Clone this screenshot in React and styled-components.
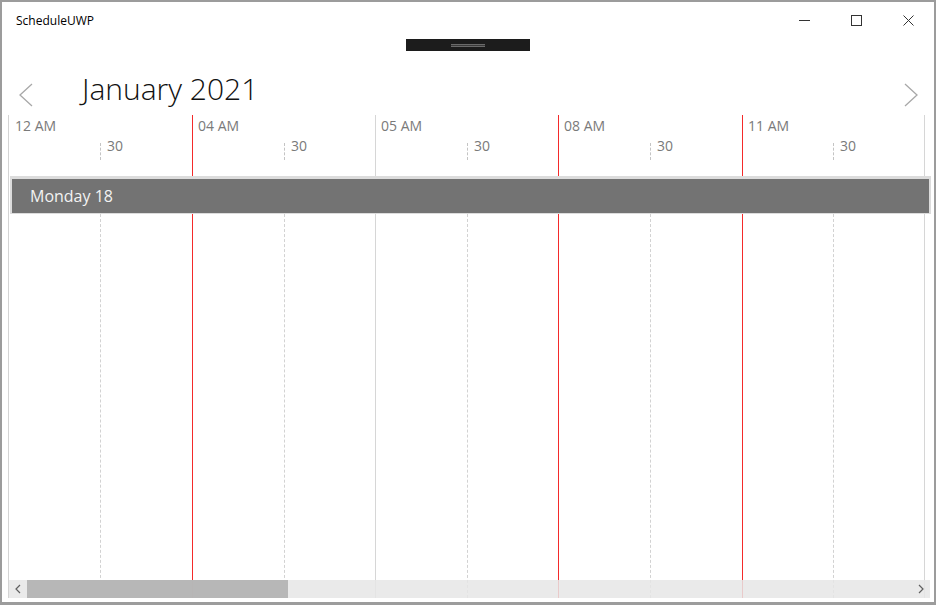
import React from "react";
import styled, { createGlobalStyle } from "styled-components";

const GlobalStyle = createGlobalStyle`
  html, body {
    margin: 0;
    padding: 0;
    background: #ffffff;
  }
  * {
    box-sizing: border-box;
  }
`;

const FONT = `"Open Sans", "Noto Sans", "Liberation Sans", sans-serif`;

// half-hour columns, whole pixels so the 1px lines stay crisp
const COLUMNS = "91px 92px 92px 91px 92px 91px 92px 92px 91px 92px";

const slots = [
  { label: "12 AM", line: "none" },
  { label: "04 AM", line: "red" },
  { label: "05 AM", line: "gray" },
  { label: "08 AM", line: "red" },
  { label: "11 AM", line: "red" },
];

const lineColors = {
  none: "transparent",
  red: "#f42a2a",
  gray: "#d6d6d6",
  dashed: "#d2d2d2",
};

function Chevron({ dir }) {
  const points = dir === "left" ? "13,1 1,12 13,23" : "1,1 13,12 1,23";
  return (
    <svg width="14" height="24" viewBox="0 0 14 24">
      <polyline points={points} fill="none" stroke="#a8a8a8" strokeWidth="1.3" />
    </svg>
  );
}

function SmallArrow({ dir }) {
  const points = dir === "left" ? "5,1 1,5 5,9" : "1,1 5,5 1,9";
  return (
    <svg width="7" height="10" viewBox="0 0 7 10">
      <polyline points={points} fill="none" stroke="#606060" strokeWidth="1.2" />
    </svg>
  );
}

function App() {
  const columns = slots.flatMap((slot, index) => [
    { key: `h${index}`, line: slot.line },
    { key: `m${index}`, line: "dashed" },
  ]);

  return (
    <>
      <GlobalStyle />
      <Window>
        <TitleBar>
          <Title>ScheduleUWP</Title>
          <Controls>
            <ControlButton>
              <svg width="11" height="11" viewBox="0 0 11 11">
                <line x1="0" y1="5.5" x2="11" y2="5.5" stroke="#333" strokeWidth="1" />
              </svg>
            </ControlButton>
            <ControlButton>
              <svg width="11" height="11" viewBox="0 0 11 11">
                <rect x="0.5" y="0.5" width="10" height="10" fill="none" stroke="#333" strokeWidth="1" />
              </svg>
            </ControlButton>
            <ControlButton>
              <svg width="11" height="11" viewBox="0 0 11 11">
                <path d="M0.5 0.5 L10.5 10.5 M10.5 0.5 L0.5 10.5" stroke="#333" strokeWidth="1" />
              </svg>
            </ControlButton>
          </Controls>
        </TitleBar>

        <GripRow>
          <Grip>
            <GripLine />
          </Grip>
        </GripRow>

        <Header>
          <NavButton>
            <Chevron dir="left" />
          </NavButton>
          <MonthTitle>January 2021</MonthTitle>
          <HeaderSpacer />
          <NavButton>
            <Chevron dir="right" />
          </NavButton>
        </Header>

        <Schedule>
          <Ruler>
            {slots.map((slot, index) => (
              <React.Fragment key={index}>
                <RulerCell $line={slot.line}>
                  <HourLabel>{slot.label}</HourLabel>
                </RulerCell>
                <RulerCell $line="none">
                  <Tick />
                  <HalfLabel>30</HalfLabel>
                </RulerCell>
              </React.Fragment>
            ))}
          </Ruler>

          <DayBar>
            <DayLabel>Monday 18</DayLabel>
          </DayBar>

          <Body>
            <Grid>
              {columns.map(col => (
                <GridCell key={col.key} $line={col.line} />
              ))}
            </Grid>
            <ScrollBar>
              <ScrollArrow>
                <SmallArrow dir="left" />
              </ScrollArrow>
              <Track>
                <Thumb />
              </Track>
              <ScrollArrow>
                <SmallArrow dir="right" />
              </ScrollArrow>
            </ScrollBar>
          </Body>
        </Schedule>
      </Window>
    </>
  );
}

export default App;

const Window = styled.div`
  width: 936px;
  height: 605px;
  border: 2px solid #9c9c9c;
  border-bottom-width: 3px;
  background: #ffffff;
  display: flex;
  flex-direction: column;
  font-family: ${FONT};
  overflow: hidden;
`;

const TitleBar = styled.div`
  height: 32px;
  display: flex;
  align-items: center;
  justify-content: space-between;
`;

const Title = styled.div`
  padding-left: 14px;
  font-size: 12px;
  color: #000;
  margin-top: 4px;
`;

const Controls = styled.div`
  display: flex;
  height: 100%;
`;

const ControlButton = styled.div`
  width: 52px;
  height: 100%;
  display: flex;
  align-items: center;
  justify-content: center;
  padding-top: 4px;
`;

const GripRow = styled.div`
  height: 19px;
  display: flex;
  justify-content: center;
  padding-top: 5px;
`;

const Grip = styled.div`
  width: 124px;
  height: 12px;
  background: #1c1c1c;
  display: flex;
  align-items: center;
  justify-content: center;
`;

const GripLine = styled.div`
  width: 34px;
  height: 3px;
  border-top: 1px solid #6a6a6a;
  border-bottom: 1px solid #6a6a6a;
  background: #3a3a3a;
`;

const Header = styled.div`
  height: 62px;
  display: flex;
  align-items: center;
  padding: 0 15px 0 16px;
`;

const NavButton = styled.div`
  width: 16px;
  display: flex;
  justify-content: center;
  margin-top: 22px;
`;

const MonthTitle = styled.div`
  margin-left: 48px;
  font-size: 30px;
  font-weight: 300;
  color: #111;
  margin-top: 8px;
`;

const HeaderSpacer = styled.div`
  flex: 1;
`;

const Schedule = styled.div`
  flex: 1;
  margin: 0 4px 4px 6px;
  border-left: 1px solid #d4d4d4;
  display: flex;
  flex-direction: column;
  min-height: 0;
`;

const Ruler = styled.div`
  height: 61px;
  display: grid;
  grid-template-columns: ${COLUMNS} 1fr;
`;

const RulerCell = styled.div`
  display: flex;
  align-items: flex-start;
  border-left: 1px solid ${({ $line }) => lineColors[$line]};
  padding-left: 5px;
  &:nth-child(10) {
    border-right: 1px solid #d6d6d6;
  }
`;

const HourLabel = styled.span`
  font-size: 14px;
  line-height: 18px;
  color: #7a7a7a;
  padding-top: 2px;
`;

const Tick = styled.div`
  width: 0;
  height: 17px;
  margin-top: 28px;
  margin-left: -6px;
  border-left: 1px dashed #c4c4c4;
`;

const HalfLabel = styled.span`
  font-size: 14px;
  line-height: 18px;
  color: #7a7a7a;
  margin-top: 22px;
  margin-left: 6px;
`;

const DayBar = styled.div`
  height: 38px;
  width: 921px;
  margin-left: 1px;
  border: 2px solid #dcdcdc;
  border-top-width: 3px;
  border-bottom-width: 1px;
  background: #737373;
  display: flex;
  align-items: center;
`;

const DayLabel = styled.span`
  padding-left: 18px;
  font-size: 16px;
  color: #f2f2f2;
`;

const Body = styled.div`
  position: relative;
  flex: 1;
  min-height: 0;
`;

const Grid = styled.div`
  height: 100%;
  display: grid;
  grid-template-columns: ${COLUMNS} 1fr;
`;

const GridCell = styled.div`
  border-left: 1px ${({ $line }) => ($line === "dashed" ? "dashed" : "solid")}
    ${({ $line }) => lineColors[$line]};
  &:nth-child(10) {
    border-right: 1px solid #d6d6d6;
  }
`;

const ScrollBar = styled.div`
  position: absolute;
  left: 0;
  right: 0;
  bottom: 0;
  height: 18px;
  display: flex;
  align-items: stretch;
  background: rgba(230, 230, 230, 0.85);
`;

const ScrollArrow = styled.div`
  width: 18px;
  display: flex;
  align-items: center;
  justify-content: center;
`;

const Track = styled.div`
  flex: 1;
  display: flex;
`;

const Thumb = styled.div`
  width: 261px;
  background: rgba(180, 180, 180, 0.94);
`;
